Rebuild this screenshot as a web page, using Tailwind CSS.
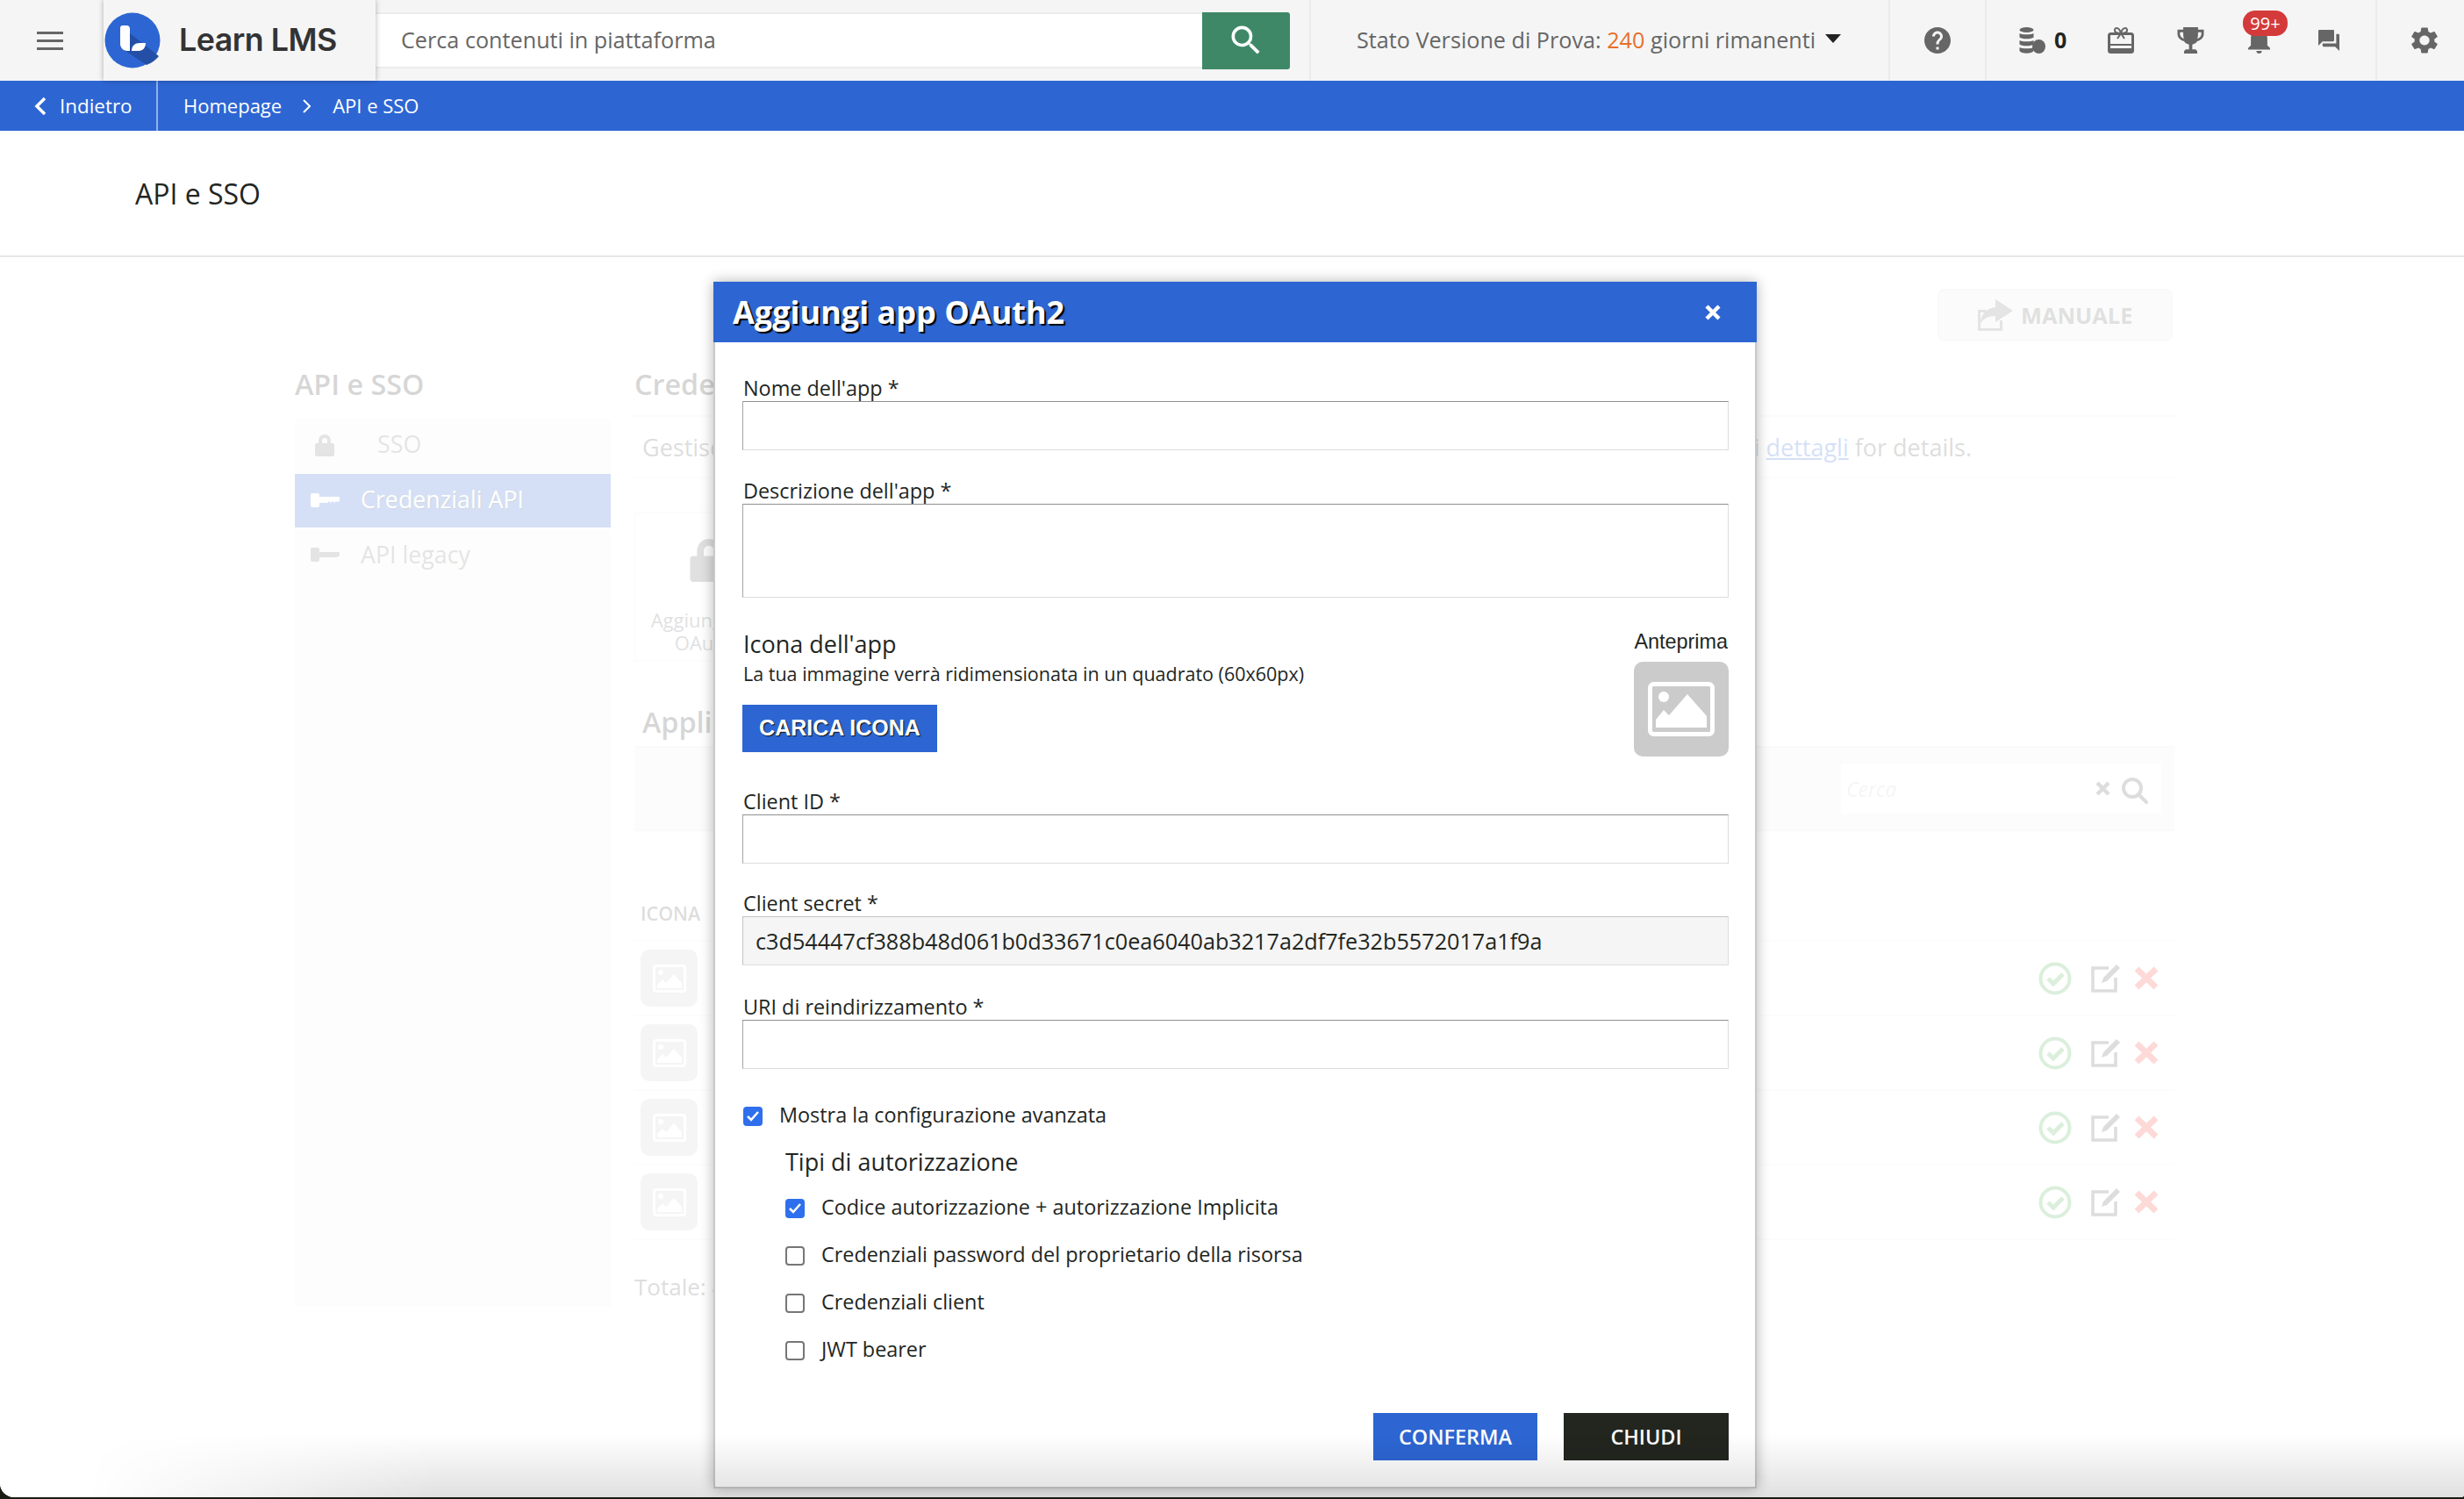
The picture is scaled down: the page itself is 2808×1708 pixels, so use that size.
<!DOCTYPE html>
<html lang="it">
<head>
<meta charset="utf-8">
<title>API e SSO</title>
<script src="https://cdn.jsdelivr.net/npm/@tailwindcss/browser@4"></script>
</head>
<body class="bg-[#1a1c14] h-[1708px] overflow-hidden font-['Open_Sans',sans-serif] text-[#22261f]">
<div class="relative h-[1706px] bg-white rounded-bl-[16px] rounded-br-[3px] overflow-hidden">

  <!-- top bar -->
  <header class="h-[92px] bg-[#f5f5f5] flex items-stretch text-[#666]">
    <div class="w-[118px] flex items-center pl-[42px]">
      <div class="w-[30px] h-[21px] flex flex-col justify-between">
        <span class="h-[3px] bg-[#666]"></span><span class="h-[3px] bg-[#666]"></span><span class="h-[3px] bg-[#666]"></span>
      </div>
    </div>
    <div class="relative z-10 w-[310px] flex items-center gap-[21px] pl-[1px] shadow-[0_0_6px_rgba(0,0,0,0.3)] bg-[#f5f5f5]">
      <svg class="w-[64px] h-[64px]" viewBox="0 0 64 64">
        <circle cx="32" cy="32" r="31.5" fill="#2d66d3"/>
        <path d="M29 24l33 26a31.5 31.5 0 0 1-14 10L18 40z" fill="#234fa6"/>
        <path d="M18 18a3 3 0 0 1 3-3h4a4 4 0 0 1 4 4v25h-3c-5 0-8-4-8-8z" fill="#fff"/>
        <path d="M31 44c0-6 4-9 9-9h7c0 5-3 9-8 9z" fill="#fff"/>
      </svg>
      <span class="font-['Inter',sans-serif] font-semibold text-[35.8px] text-[#333] tracking-[-0.5px]">Learn LMS</span>
    </div>
    <div class="flex items-center w-[1064px] pr-[22px]">
      <div class="flex-1 h-[64px] bg-white border-y-2 border-[#ececec] flex items-center pl-[29px] text-[25.2px] text-[#666]">Cerca contenuti in piattaforma</div>
      <div class="w-[100px] h-[65px] bg-[#3e8868] rounded-r-[3px] flex items-center justify-center">
        <svg class="w-[44px] h-[44px]" viewBox="0 0 24 24" fill="#fff"><path d="M15.5 14h-.79l-.28-.27A6.47 6.47 0 0 0 16 9.5 6.5 6.5 0 1 0 9.5 16c1.61 0 3.09-.59 4.23-1.57l.27.28v.79l5 4.99L20.49 19l-4.99-5zm-6 0C7.01 14 5 11.99 5 9.5S7.01 5 9.5 5 14 7.01 14 9.5 11.99 14 9.5 14z"/></svg>
      </div>
    </div>
    <div class="w-[660px] border-l-2 border-[#ebebeb] flex items-center pl-[52px] text-[25.2px] text-[#666]">
      <span>Stato Versione di Prova: <span class="text-[#e8702a]">240</span> giorni rimanenti</span>
      <span class="ml-[11px] mb-[4px] w-0 h-0 border-x-[9px] border-x-transparent border-t-[10px] border-t-[#222]"></span>
    </div>
    <div class="w-[110px] border-l-2 border-[#ebebeb] flex items-center justify-center">
      <svg class="w-[30px] h-[30px]" viewBox="2 2 20 20" fill="#666"><path d="M12 2C6.48 2 2 6.48 2 12s4.48 10 10 10 10-4.48 10-10S17.52 2 12 2zm1 17h-2v-2h2v2zm2.07-7.75l-.9.92C13.45 12.9 13 13.5 13 15h-2v-.5c0-1.1.45-2.1 1.17-2.83l1.24-1.26c.37-.36.59-.86.59-1.41 0-1.1-.9-2-2-2s-2 .9-2 2H8c0-2.21 1.79-4 4-4s4 1.79 4 4c0 .88-.36 1.68-.93 2.25z"/></svg>
    </div>
    <div class="relative w-[447px] border-x-2 border-[#ebebeb] flex items-center pl-[37px]">
      <svg class="w-[30px] h-[30px]" viewBox="0 0 30 30" fill="#666">
        <ellipse cx="8.5" cy="3" rx="8" ry="3"/><path d="M0.5 7c2 1.8 14 1.8 16 0v4.5c-2 2.4-14 2.4-16 0zM0.5 15c2 1.8 14 1.8 16 0v4.5c-2 2.4-14 2.4-16 0zM0.5 23c2 1.8 14 1.8 16 0v4c-2 3.6-14 3.6-16 0z"/><ellipse cx="22.5" cy="22" rx="7.5" ry="8"/>
      </svg>
      <span class="ml-[10px] font-bold text-[25px] text-[#22261f]">0</span>
      <svg class="ml-[47px] w-[30px] h-[30px]" viewBox="0 0 30 30" fill="none" stroke="#666"><rect x="1.5" y="7.5" width="27" height="21" rx="2" stroke-width="3"/><path d="M1 20h28" stroke-width="2"/><path d="M1 26h28" stroke-width="4"/><path d="M15 7c-1-4-3-6-5-6s-3 3-1 4.500 4 1.500 6 1.500c2 0 4 0 6-1.500s1-4.500-1-4.500-4 2-5 6zM15 7l-4 6M15 7l4 6" stroke-width="2"/></svg>
      <svg class="ml-[49px] w-[31px] h-[30px]" viewBox="0 0 32 32" fill="#666"><path fill-rule="evenodd" d="M7 0h18v3h7v5c0 5-4 8-8 9-1 2-3 3-6 4v6h4l2 2v3H8v-3l2-2h4v-6c-3-1-5-2-6-4-4-1-8-4-8-9V3h7zM3 6v2c0 3 2 5 5 6-1-2-1-5-1-8zM29 6h-4c0 3 0 6-1 8 3-1 5-3 5-6z"/></svg>
      <svg class="ml-[50px] w-[25px] h-[30px]" viewBox="4 2.500 16 19.500" preserveAspectRatio="none" fill="#666"><path d="M12 22c1.1 0 2-.9 2-2h-4c0 1.1.9 2 2 2zm6-6v-5c0-3.07-1.63-5.64-4.5-6.32V4c0-.83-.67-1.5-1.5-1.5s-1.5.67-1.5 1.5v.68C7.64 5.36 6 7.92 6 11v5l-2 2v1h16v-1l-2-2z"/></svg>
      <span class="absolute left-[292px] top-[12px] w-[51px] h-[29px] rounded-[14px] bg-[#d43a3a] text-white text-[20px] leading-[29px] text-center">99+</span>
      <svg class="ml-[55px] w-[24px] h-[24px]" viewBox="2 2 20 20" preserveAspectRatio="none" fill="#666"><path d="M21 6h-2v9H6v2c0 .55.45 1 1 1h11l4 4V7c0-.55-.45-1-1-1zm-4 6V3c0-.55-.45-1-1-1H3c-.55 0-1 .45-1 1v14l4-4h10c.55 0 1-.45 1-1z"/></svg>
    </div>
    <div class="flex-1 flex items-center justify-center">
      <svg class="w-[30px] h-[30px] mr-[-8px]" viewBox="2.500 2 19 20" preserveAspectRatio="none" fill="#666"><path d="M19.14 12.94c.04-.3.06-.61.06-.94 0-.32-.02-.64-.07-.94l2.03-1.58a.49.49 0 0 0 .12-.61l-1.92-3.32a.488.488 0 0 0-.59-.22l-2.39.96c-.5-.38-1.03-.7-1.62-.94l-.36-2.54a.484.484 0 0 0-.48-.41h-3.84c-.24 0-.43.17-.47.41l-.36 2.54c-.59.24-1.13.57-1.62.94l-2.39-.96c-.22-.08-.47 0-.59.22L2.74 8.87c-.12.21-.08.47.12.61l2.03 1.58c-.05.3-.09.63-.09.94s.02.64.07.94l-2.03 1.58a.49.49 0 0 0-.12.61l1.92 3.32c.12.22.37.29.59.22l2.39-.96c.5.38 1.03.7 1.62.94l.36 2.54c.05.24.24.41.48.41h3.84c.24 0 .44-.17.47-.41l.36-2.54c.59-.24 1.13-.56 1.62-.94l2.39.96c.22.08.47 0 .59-.22l1.92-3.32c.12-.22.07-.47-.12-.61l-2.01-1.58zM12 15.6c-1.98 0-3.6-1.62-3.6-3.6s1.62-3.6 3.6-3.6 3.6 1.62 3.6 3.6-1.62 3.6-3.6 3.6z"/></svg>
    </div>
  </header>

  <!-- breadcrumb -->
  <nav class="h-[57px] bg-[#2d66d3] flex items-center text-white text-[22px]">
    <div class="w-[180px] h-full border-r-2 border-[#8fb0ea] flex items-center pl-[39px] gap-[15px]">
      <svg class="w-[14px] h-[22px]" viewBox="0 0 14 22" fill="none" stroke="#fff" stroke-width="3.5"><path d="M12 2L3 11l9 9"/></svg>
      <span class="text-[22.4px]">Indietro</span>
    </div>
    <span class="ml-[29px]">Homepage</span>
    <svg class="ml-[23px] w-[10px] h-[16px]" viewBox="0 0 10 16" fill="none" stroke="#fff" stroke-width="2"><path d="M2 1l7 7-7 7"/></svg>
    <span class="ml-[25px]">API e SSO</span>
  </nav>

  <!-- page title -->
  <div class="h-[144px] flex items-center pl-[154px] pt-[2px] border-b-2 border-[#e6e6e6] text-[32px] text-[#22261f]">API e SSO</div>

  <!-- page body, dimmed by the overlay -->
  <main class="pl-[336px] pr-[330px] pt-[36px] text-[#333]">
    <div class="flex justify-end pr-[2px]">
      <div class="w-[268px] h-[60px] bg-[#ececec] border-2 border-[#e0e0e0] rounded-[8px] flex items-center pl-[42px] gap-[9px] text-[#666]">
        <svg class="w-[42px] h-[36px]" viewBox="0 0 42 36" fill="#777"><path d="M22 0l20 13-20 13v-7C14 19 8 22 5 28c0-10 6-18 17-19z"/><path d="M2 12h9v3H5v18h22v-9h3v12H2z"/></svg>
        <span class="font-bold text-[25.4px] pt-[1px]">MANUALE</span>
      </div>
    </div>
    <div class="mt-[29px] grid grid-cols-[360px_1fr] gap-x-[27px]">
      <aside>
        <h2 class="h-[59px] font-semibold text-[32.3px] leading-[39px]">API e SSO</h2>
        <div class="h-[1012px] bg-[#f6f6f6] text-[26.8px] text-[#777]">
          <div class="h-[63px] flex items-center pl-[23px] pb-[4px]">
            <svg class="w-[22px] h-[26px]" viewBox="0 0 22 26" fill="#777"><path fill-rule="evenodd" d="M4 11V8a7 7 0 0 1 14 0v3h2a2 2 0 0 1 2 2v11a2 2 0 0 1-2 2H2a2 2 0 0 1-2-2V13a2 2 0 0 1 2-2zm4 0h6V8a3 3 0 0 0-6 0z"/></svg>
            <span class="ml-[49px]">SSO</span>
          </div>
          <div class="h-[61px] bg-[#2d66d3] text-white flex items-center pl-[18px] pb-[2px] [text-shadow:1px_1px_1px_rgba(0,0,0,0.5)]">
            <svg class="w-[33px] h-[16px]" viewBox="0 0 33 16" fill="#fff"><rect width="10" height="16" rx="2"/><path d="M10 4h23v5l-2 1-2-1-2 2-2-2-2 2-2-2-2 2h-9z"/></svg>
            <span class="ml-[24px]">Credenziali API</span>
          </div>
          <div class="h-[63px] flex items-center pl-[18px] pb-[1px]">
            <svg class="w-[33px] h-[16px]" viewBox="0 0 33 16" fill="#777"><rect width="10" height="16" rx="2"/><path d="M10 5h23v4l-3 2H10z"/></svg>
            <span class="ml-[24px]">API legacy</span>
          </div>
        </div>
      </aside>
      <section class="relative">
        <h2 class="h-[57px] border-b-2 border-[#eee] font-semibold text-[32.3px] leading-[39px]">Credenziali API</h2>
        <div class="h-[70px] border-b-2 border-[#eee] flex items-center justify-between pl-[9px] pr-[231px] pt-[3px] text-[27px] text-[#555]">
          <span>Gestisci le app OAuth2</span>
          <span>i <span class="text-[#2d66d3] underline">dettagli</span> for details.</span>
        </div>
        <div class="mt-[38px] w-[170px] h-[171px] border-2 border-[#eee] flex flex-col items-center text-[22px] leading-[26px] text-[#666] text-center">
          <svg class="mt-[27px] w-[44px] h-[51px]" viewBox="0 0 22 26" fill="#666"><path fill-rule="evenodd" d="M4 11V8a7 7 0 0 1 14 0v3h2a2 2 0 0 1 2 2v11a2 2 0 0 1-2 2H2a2 2 0 0 1-2-2V13a2 2 0 0 1 2-2zm4 0h6V8a3 3 0 0 0-6 0z"/></svg>
          <span class="mt-[30px]">Aggiungi app OAuth2</span>
        </div>
        <h2 class="h-[96px] pt-[48px] pl-[9px] font-semibold text-[32.3px] leading-[40px]">Applicazioni</h2>
        <div class="h-[97px] bg-[#efefef] border-y-2 border-[#e8e8e8] flex items-center justify-end pr-[15px]">
          <div class="w-[365px] h-[57px] bg-white flex items-center pl-[6px] pr-[15px] text-[23px] italic text-[#ccc]">
            <span class="flex-1 pt-[2px]">Cerca</span>
            <svg class="w-[17px] h-[17px] mr-[13px]" viewBox="0 0 17 17" stroke="#555" stroke-width="4.500"><path d="M2 2l13 13M15 2L2 15"/></svg>
            <svg class="w-[30px] h-[30px] mt-[4px]" viewBox="0 0 30 30" fill="none" stroke="#555" stroke-width="4"><circle cx="12" cy="12" r="10"/><path d="M19 19l9 9" stroke-linecap="round"/></svg>
          </div>
        </div>
        <div class="h-[126px] border-b-2 border-[#eee] flex items-end pl-[7px] pb-[14px] text-[21.5px] font-semibold text-[#555]"><span>ICONA</span></div>

        <div class="h-[85px] border-b-2 border-[#eee] flex items-center pl-[7px] pr-[18px] justify-between">
          <div class="w-[65px] h-[65px] rounded-[10px] bg-[#ccc] flex items-center justify-center">
            <svg class="w-[38px] h-[32px]" viewBox="0 0 38 32"><rect x="1.500" y="1.500" width="35" height="29" rx="2" fill="none" stroke="#fff" stroke-width="3"/><circle cx="9" cy="9" r="3" fill="#fff"/><path d="M5 27v-4l6-6 4 4 9-10 9 10v6z" fill="#fff"/></svg>
          </div>
          <div class="flex items-center">
            <svg class="w-[38px] h-[38px]" viewBox="0 0 38 38" fill="none"><circle cx="19" cy="19" r="16.500" stroke="#4caf50" stroke-width="4"/><path d="M11 19l6 6 11-11" stroke="#4caf50" stroke-width="5"/></svg>
            <svg class="ml-[22px] w-[34px] h-[33px]" viewBox="0 0 34 33" fill="none"><path d="M20 5H2v26h26V16" stroke="#555" stroke-width="3.500"/><path d="M12 22l2-6L29 1l4 4-15 15z" fill="#555"/></svg>
            <svg class="ml-[15px] w-[28px] h-[27px]" viewBox="0 0 28 27" stroke="#f44336" stroke-width="7"><path d="M3 3l22 21M25 3L3 24"/></svg>
          </div>
        </div>
        <div class="h-[85px] border-b-2 border-[#eee] flex items-center pl-[7px] pr-[18px] justify-between">
          <div class="w-[65px] h-[65px] rounded-[10px] bg-[#ccc] flex items-center justify-center">
            <svg class="w-[38px] h-[32px]" viewBox="0 0 38 32"><rect x="1.500" y="1.500" width="35" height="29" rx="2" fill="none" stroke="#fff" stroke-width="3"/><circle cx="9" cy="9" r="3" fill="#fff"/><path d="M5 27v-4l6-6 4 4 9-10 9 10v6z" fill="#fff"/></svg>
          </div>
          <div class="flex items-center">
            <svg class="w-[38px] h-[38px]" viewBox="0 0 38 38" fill="none"><circle cx="19" cy="19" r="16.500" stroke="#4caf50" stroke-width="4"/><path d="M11 19l6 6 11-11" stroke="#4caf50" stroke-width="5"/></svg>
            <svg class="ml-[22px] w-[34px] h-[33px]" viewBox="0 0 34 33" fill="none"><path d="M20 5H2v26h26V16" stroke="#555" stroke-width="3.500"/><path d="M12 22l2-6L29 1l4 4-15 15z" fill="#555"/></svg>
            <svg class="ml-[15px] w-[28px] h-[27px]" viewBox="0 0 28 27" stroke="#f44336" stroke-width="7"><path d="M3 3l22 21M25 3L3 24"/></svg>
          </div>
        </div>
        <div class="h-[85px] border-b-2 border-[#eee] flex items-center pl-[7px] pr-[18px] justify-between">
          <div class="w-[65px] h-[65px] rounded-[10px] bg-[#ccc] flex items-center justify-center">
            <svg class="w-[38px] h-[32px]" viewBox="0 0 38 32"><rect x="1.500" y="1.500" width="35" height="29" rx="2" fill="none" stroke="#fff" stroke-width="3"/><circle cx="9" cy="9" r="3" fill="#fff"/><path d="M5 27v-4l6-6 4 4 9-10 9 10v6z" fill="#fff"/></svg>
          </div>
          <div class="flex items-center">
            <svg class="w-[38px] h-[38px]" viewBox="0 0 38 38" fill="none"><circle cx="19" cy="19" r="16.500" stroke="#4caf50" stroke-width="4"/><path d="M11 19l6 6 11-11" stroke="#4caf50" stroke-width="5"/></svg>
            <svg class="ml-[22px] w-[34px] h-[33px]" viewBox="0 0 34 33" fill="none"><path d="M20 5H2v26h26V16" stroke="#555" stroke-width="3.500"/><path d="M12 22l2-6L29 1l4 4-15 15z" fill="#555"/></svg>
            <svg class="ml-[15px] w-[28px] h-[27px]" viewBox="0 0 28 27" stroke="#f44336" stroke-width="7"><path d="M3 3l22 21M25 3L3 24"/></svg>
          </div>
        </div>
        <div class="h-[85px] border-b-2 border-[#eee] flex items-center pl-[7px] pr-[18px] justify-between">
          <div class="w-[65px] h-[65px] rounded-[10px] bg-[#ccc] flex items-center justify-center">
            <svg class="w-[38px] h-[32px]" viewBox="0 0 38 32"><rect x="1.500" y="1.500" width="35" height="29" rx="2" fill="none" stroke="#fff" stroke-width="3"/><circle cx="9" cy="9" r="3" fill="#fff"/><path d="M5 27v-4l6-6 4 4 9-10 9 10v6z" fill="#fff"/></svg>
          </div>
          <div class="flex items-center">
            <svg class="w-[38px] h-[38px]" viewBox="0 0 38 38" fill="none"><circle cx="19" cy="19" r="16.500" stroke="#4caf50" stroke-width="4"/><path d="M11 19l6 6 11-11" stroke="#4caf50" stroke-width="5"/></svg>
            <svg class="ml-[22px] w-[34px] h-[33px]" viewBox="0 0 34 33" fill="none"><path d="M20 5H2v26h26V16" stroke="#555" stroke-width="3.500"/><path d="M12 22l2-6L29 1l4 4-15 15z" fill="#555"/></svg>
            <svg class="ml-[15px] w-[28px] h-[27px]" viewBox="0 0 28 27" stroke="#f44336" stroke-width="7"><path d="M3 3l22 21M25 3L3 24"/></svg>
          </div>
        </div>
        <div class="mt-[34px] text-[26px] text-[#555]">Totale: 4</div>
      </section>
    </div>
  </main>

  <!-- dimming overlay -->
  <div class="absolute inset-x-0 top-[294px] bottom-0 bg-white/80"></div>

  <!-- modal -->
  <div class="absolute left-[813px] top-[321px] w-[1189px] h-[1375px] bg-white border-x-2 border-b-2 border-[#c9c9c9] shadow-[0_0_14px_rgba(0,0,0,0.3)]">
    <div class="h-[69px] bg-[#2d66d3] flex items-center justify-between pl-[22px] pr-[41px] -mx-[2px]">
      <span class="font-bold text-[36px] text-white [text-shadow:2px_2px_1px_#000]">Aggiungi app OAuth2</span>
      <svg class="w-[18px] h-[18px]" viewBox="0 0 18 18" stroke="#fff" stroke-width="4.500"><path d="M2 2l14 14M16 2L2 16"/></svg>
    </div>
    <div class="pl-[31px] pr-[30px] pt-[38px] text-[23.4px] text-[#22261f]">
      <label class="block h-[29px] leading-[28px] pl-[1px]">Nome dell'app *</label>
      <input type="text" class="block w-full h-[56px] border border-t-[#8f8f8f] border-l-[#a5a5a5] border-r-[#ddd] border-b-[#ddd] bg-white outline-none">
      <label class="block mt-[32px] h-[29px] leading-[28px] pl-[1px]">Descrizione dell'app *</label>
      <textarea class="block w-full h-[107px] border border-t-[#8f8f8f] border-l-[#a5a5a5] border-r-[#ddd] border-b-[#ddd] bg-white outline-none resize-none"></textarea>

      <div class="mt-[35px] h-[146px] flex justify-between">
        <div>
          <div class="h-[38px] leading-[36px] text-[27px] pl-[1px]">Icona dell'app</div>
          <div class="h-[28px] mt-[1px] leading-[26px] text-[21.5px] pl-[1px]">La tua immagine verrà ridimensionata in un quadrato (60x60px)</div>
          <button class="mt-[20px] w-[222px] h-[54px] bg-[#2d66d3] text-white font-['Liberation_Sans',sans-serif] font-bold text-[25px] [text-shadow:1px_1px_1px_#111]">CARICA ICONA</button>
        </div>
        <div class="w-[108px] flex flex-col items-end">
          <div class="h-[32px] leading-[30px] pr-[1px] font-['Liberation_Sans',sans-serif] text-[23.4px] whitespace-nowrap">Anteprima</div>
          <div class="mt-[6px] w-[108px] h-[108px] rounded-[10px] bg-[#cbcbcb] flex items-center justify-center">
            <svg class="w-[76px] h-[62px]" viewBox="0 0 76 62"><rect x="2.500" y="2.500" width="71" height="57" rx="4" fill="none" stroke="#fff" stroke-width="5"/><circle cx="18" cy="17" r="6" fill="#fff"/><path d="M9 52v-9l9-11 6 6 21-24 22 25v13z" fill="#fff"/></svg>
          </div>
        </div>
      </div>

      <label class="block mt-[37px] h-[29px] leading-[28px] pl-[1px]">Client ID *</label>
      <input type="text" class="block w-full h-[56px] border border-t-[#8f8f8f] border-l-[#a5a5a5] border-r-[#ddd] border-b-[#ddd] bg-white outline-none">
      <label class="block mt-[31px] h-[29px] leading-[29px] pl-[1px]">Client secret *</label>
      <input type="text" value="c3d54447cf388b48d061b0d33671c0ea6040ab3217a2df7fe32b5572017a1f9a" class="block w-full h-[56px] px-[14px] text-[25.2px] border border-t-[#c4c4c4] border-l-[#c4c4c4] border-r-[#ddd] border-b-[#ddd] bg-[#f5f5f5] outline-none">
      <label class="block mt-[33px] h-[29px] leading-[28px] pl-[1px]">URI di reindirizzamento *</label>
      <input type="text" class="block w-full h-[56px] border border-t-[#8f8f8f] border-l-[#a5a5a5] border-r-[#ddd] border-b-[#ddd] bg-white outline-none">

      <label class="mt-[43px] h-[22px] flex items-center pl-[1px]">
        <span class="w-[22px] h-[22px] rounded-[4px] bg-[#2f6fed] flex items-center justify-center"><svg class="w-[16px] h-[16px]" viewBox="0 0 16 16" fill="none" stroke="#fff" stroke-width="2.500"><path d="M2 8l4 4 8-9"/></svg></span>
        <span class="ml-[19px] pb-[2px]">Mostra la configurazione avanzata</span>
      </label>
      <div class="mt-[23px] h-[38px] leading-[36px] text-[27px] pl-[49px]">Tipi di autorizzazione</div>
      <div class="mt-[22px] pl-[49px] flex flex-col gap-[32px]">
        <label class="h-[22px] flex items-center">
          <span class="w-[22px] h-[22px] rounded-[4px] bg-[#2f6fed] flex items-center justify-center"><svg class="w-[16px] h-[16px]" viewBox="0 0 16 16" fill="none" stroke="#fff" stroke-width="2.500"><path d="M2 8l4 4 8-9"/></svg></span>
          <span class="ml-[19px] pb-[2px]">Codice autorizzazione + autorizzazione Implicita</span>
        </label>
        <label class="h-[22px] flex items-center">
          <span class="w-[22px] h-[22px] rounded-[4px] bg-white border-2 border-[#767676]"></span>
          <span class="ml-[19px] pb-[2px]">Credenziali password del proprietario della risorsa</span>
        </label>
        <label class="h-[22px] flex items-center">
          <span class="w-[22px] h-[22px] rounded-[4px] bg-white border-2 border-[#767676]"></span>
          <span class="ml-[19px] pb-[2px]">Credenziali client</span>
        </label>
        <label class="h-[22px] flex items-center">
          <span class="w-[22px] h-[22px] rounded-[4px] bg-white border-2 border-[#767676]"></span>
          <span class="ml-[19px] pb-[2px]">JWT bearer</span>
        </label>
      </div>
      <div class="mt-[60px] flex justify-end gap-[30px]">
        <button class="w-[187px] h-[54px] pt-[1px] bg-[#2d66d3] text-white font-semibold text-[23.4px]">CONFERMA</button>
        <button class="w-[188px] h-[54px] pt-[1px] bg-[#22261f] text-white font-semibold text-[23.4px]">CHIUDI</button>
      </div>
    </div>
  </div>

  <!-- window shadow along the bottom edge, over everything -->
  <div class="absolute inset-x-0 bottom-0 h-[72px] pointer-events-none bg-gradient-to-b from-black/0 to-black/12 [mask-image:linear-gradient(to_right,transparent_100px,black_500px)]"></div>
</div>
</body>
</html>
